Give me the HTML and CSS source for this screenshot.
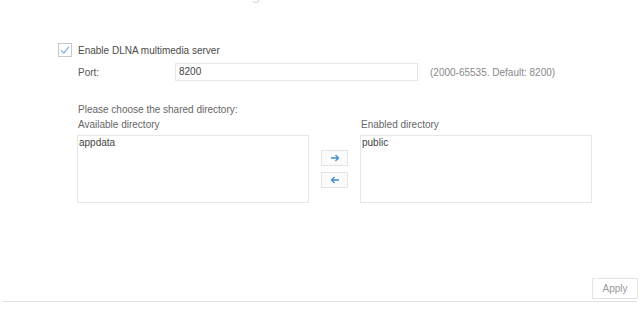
FILE: index.html
```html
<!DOCTYPE html>
<html>
<head>
<meta charset="utf-8">
<link rel="stylesheet" href="styles.css">
</head>
<body>
<div class="page">
  <div class="title"><div class="title-text">DLNA multimedia server settings</div></div>
  <div class="main">
    <label class="check-row">
      <span class="checkbox">
        <svg width="12" height="12" viewBox="0 0 12 12"><path d="M2 6.2 L4.8 9 L10.2 2.6" fill="none" stroke="#7fb2de" stroke-width="1.2"/></svg>
      </span>
      <span class="check-label">Enable DLNA multimedia server</span>
    </label>
    <div class="port-row">
      <span class="port-label">Port:</span>
      <div class="input">8200</div>
      <span class="hint">(2000-65535. Default: 8200)</span>
    </div>
    <div class="dirs">
      <div class="dirs-title">Please choose the shared directory:</div>
      <div class="dir-row">
        <div class="dir-col">
          <div class="dir-label">Available directory</div>
          <div class="dir-box">appdata</div>
        </div>
        <div class="arrows">
          <div class="arrow-btn"><svg width="10" height="8" viewBox="0 0 10 8"><path d="M1 4 H8.5 M5.5 1 L8.5 4 L5.5 7" fill="none" stroke="#3d8fd1" stroke-width="1.3"/></svg></div>
          <div class="arrow-btn"><svg width="10" height="8" viewBox="0 0 10 8"><path d="M9 4 H1.5 M4.5 1 L1.5 4 L4.5 7" fill="none" stroke="#3d8fd1" stroke-width="1.3"/></svg></div>
        </div>
        <div class="dir-col">
          <div class="dir-label">Enabled directory</div>
          <div class="dir-box">public</div>
        </div>
      </div>
    </div>
  </div>
  <div class="footer">
    <div class="apply">Apply</div>
  </div>
  <div class="rule"></div>
</div>
</body>
</html>
```
FILE: styles.css
```css
html, body {
  margin: 0;
  padding: 0;
  background: #fff;
}
body {
  font-family: "Liberation Sans", Arial, sans-serif;
  font-size: 10px;
  color: #555;
}
.page {
  width: 640px;
  display: flex;
  flex-direction: column;
}
.title {
  height: 3px;
  overflow: hidden;
  padding-left: 50px;
}
.title-text {
  margin-top: -13px;
  font-size: 15px;
  line-height: 16px;
  color: #dcdcdc;
  white-space: nowrap;
}
.main {
  padding-left: 58px;
  margin-top: 40px;
}
.check-row {
  display: flex;
  align-items: center;
  height: 14px;
}
.checkbox {
  width: 12px;
  height: 12px;
  border: 1px solid #c9c9c9;
  display: flex;
  align-items: center;
  justify-content: center;
  background: #fff;
}
.check-label {
  margin-left: 6px;
  color: #4a4a4a;
}
.port-row {
  display: flex;
  align-items: center;
  margin-top: 6px;
  height: 18px;
  padding-left: 20px;
}
.port-label {
  width: 97px;
  color: #555;
}
.input {
  width: 238px;
  height: 16px;
  border: 1px solid #e6e6e6;
  padding-left: 3px;
  line-height: 16px;
  color: #444;
}
.hint {
  margin-left: 12px;
  color: #888;
}
.dirs {
  margin-left: 19px;
  margin-top: 22px;
}
.dirs-title {
  padding-left: 1px;
  height: 14px;
  line-height: 14px;
  color: #666;
}
.dir-row {
  display: flex;
  align-items: flex-end;
  margin-top: 1px;
}
.dir-col {
  display: flex;
  flex-direction: column;
  gap: 3px;
}
.dir-label {
  height: 14px;
  line-height: 14px;
  padding-left: 1px;
  color: #666;
}
.dir-box {
  width: 228px;
  height: 66px;
  border: 1px solid #e6e6e6;
  padding: 0 1px;
  line-height: 13px;
  color: #444;
}
.arrows {
  display: flex;
  flex-direction: column;
  gap: 6px;
  margin: 0 12px 15px 12px;
}
.arrow-btn {
  width: 25px;
  height: 14px;
  border: 1px solid #e3e3e3;
  display: flex;
  align-items: center;
  justify-content: center;
  background: #fbfbfb;
}
.footer {
  display: flex;
  justify-content: flex-end;
  padding-right: 2px;
  margin-top: 75px;
}
.apply {
  width: 44px;
  height: 19px;
  border: 1px solid #e3e3e3;
  line-height: 19px;
  text-align: center;
  color: #999;
  font-size: 10px;
}
.rule {
  margin: 2px 3px 0 3px;
  height: 1px;
  background: #e0e0e0;
}
```
